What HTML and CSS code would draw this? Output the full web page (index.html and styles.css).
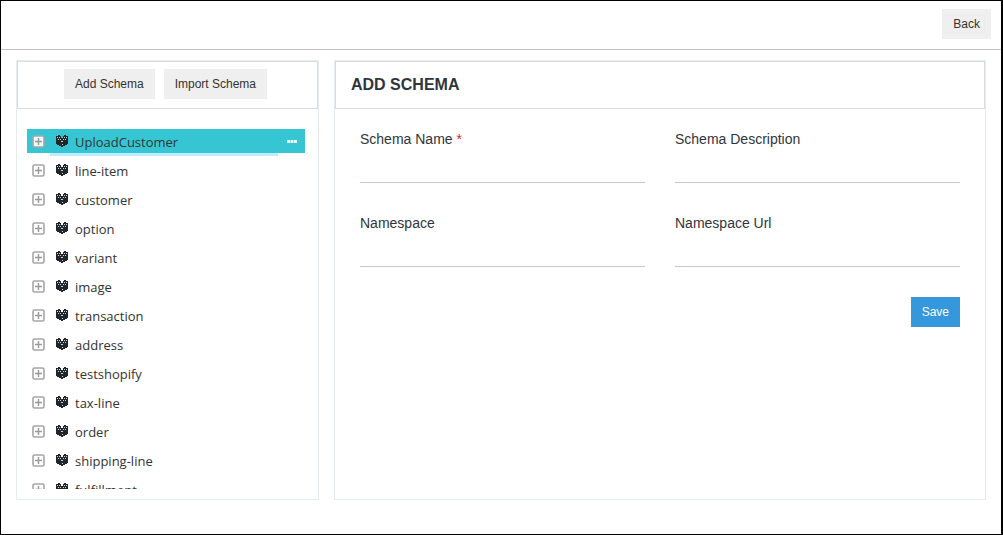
FILE: index.html
```html
<!DOCTYPE html>
<html lang="en">
<head>
<meta charset="utf-8">
<title>Add Schema</title>
<link rel="stylesheet" href="styles.css">
</head>
<body>
<svg class="sprite" aria-hidden="true">
  <symbol id="plus" viewBox="0 0 13 13">
    <rect x="1" y="1" width="11" height="11" rx="1.5" fill="#fff" fill-opacity=".9" stroke="#a6a6a6" stroke-width="1.6"/>
    <path d="M6.5 3v7M3 6.5h7" stroke="#999" stroke-width="1.4"/>
  </symbol>
  <symbol id="cubes" viewBox="0 0 12 12">
    <path d="M0 1h2V0h2v1h1v2h2V1h1V0h2v1h2v8h-1v1H9v1H7v1H5v-1H3v-1H1V9H0z" fill="#20262c"/>
    <path d="M1 2h1v1H1zM3 2h1v1H3zM8 2h1v1H8zM10 2h1v1h-1zM2 4h1v1H2zM9 4h1v1H9zM4 4h1v1H4zM7 4h1v1H7zM5 6h2v1H5zM6 9h1v1H6z" fill="#cfd6da"/>
  </symbol>
</svg>
<div class="page">
  <header class="topbar"><button class="btn" type="button">Back</button></header>
  <main class="content">
    <section class="panel">
      <div class="panel-head actions">
        <button class="btn" type="button">Add Schema</button>
        <button class="btn" type="button">Import Schema</button>
      </div>
      <ul class="tree">
        <li class="node selected"><svg class="plus"><use href="#plus"/></svg><svg class="cubes"><use href="#cubes"/></svg><span class="name">UploadCustomer</span><button class="more" type="button" aria-label="More"><svg class="dots" viewBox="0 0 10 3"><path d="M0 0h3v3H0zM3.5 0h3v3h-3zM7 0h3v3H7z" fill="#fff" fill-opacity=".9"/></svg></button></li>
        <li class="node"><svg class="plus"><use href="#plus"/></svg><svg class="cubes"><use href="#cubes"/></svg><span class="name">line-item</span></li>
        <li class="node"><svg class="plus"><use href="#plus"/></svg><svg class="cubes"><use href="#cubes"/></svg><span class="name">customer</span></li>
        <li class="node"><svg class="plus"><use href="#plus"/></svg><svg class="cubes"><use href="#cubes"/></svg><span class="name">option</span></li>
        <li class="node"><svg class="plus"><use href="#plus"/></svg><svg class="cubes"><use href="#cubes"/></svg><span class="name">variant</span></li>
        <li class="node"><svg class="plus"><use href="#plus"/></svg><svg class="cubes"><use href="#cubes"/></svg><span class="name">image</span></li>
        <li class="node"><svg class="plus"><use href="#plus"/></svg><svg class="cubes"><use href="#cubes"/></svg><span class="name">transaction</span></li>
        <li class="node"><svg class="plus"><use href="#plus"/></svg><svg class="cubes"><use href="#cubes"/></svg><span class="name">address</span></li>
        <li class="node"><svg class="plus"><use href="#plus"/></svg><svg class="cubes"><use href="#cubes"/></svg><span class="name">testshopify</span></li>
        <li class="node"><svg class="plus"><use href="#plus"/></svg><svg class="cubes"><use href="#cubes"/></svg><span class="name">tax-line</span></li>
        <li class="node"><svg class="plus"><use href="#plus"/></svg><svg class="cubes"><use href="#cubes"/></svg><span class="name">order</span></li>
        <li class="node"><svg class="plus"><use href="#plus"/></svg><svg class="cubes"><use href="#cubes"/></svg><span class="name">shipping-line</span></li>
        <li class="node"><svg class="plus"><use href="#plus"/></svg><svg class="cubes"><use href="#cubes"/></svg><span class="name">fulfillment</span></li>
      </ul>
    </section>
    <section class="panel">
      <div class="panel-head"><h1 class="title">ADD SCHEMA</h1></div>
      <form class="form">
        <div class="field"><label for="schema-name">Schema Name <span class="required">*</span></label><input id="schema-name" type="text" required></div>
        <div class="field"><label for="schema-desc">Schema Description</label><input id="schema-desc" type="text"></div>
        <div class="field"><label for="namespace">Namespace</label><input id="namespace" type="text"></div>
        <div class="field"><label for="namespace-url">Namespace Url</label><input id="namespace-url" type="text"></div>
        <div class="submit"><button class="btn primary" type="button">Save</button></div>
      </form>
    </section>
  </main>
</div>
</body>
</html>
```
FILE: styles.css
```css
* { box-sizing: border-box; }
body { margin: 0; font-family: "Liberation Sans", Arial, sans-serif; color: #2f353b; }
.sprite { display: none; }
.page {
  display: flex;
  flex-direction: column;
  height: 100vh;
  border: 1px solid #000;
  border-right-width: 2px;
  background: #fff;
}
.topbar {
  display: flex;
  justify-content: flex-end;
  padding: 8px 10px 10px;
  border-bottom: 1px solid #c2c2c2;
}
.btn {
  height: 30px;
  padding: 0 11px;
  border: 0;
  background: #efefef;
  color: #333;
  font-family: "Liberation Sans", Arial, sans-serif;
  font-size: 12px;
}
.content {
  display: grid;
  grid-template-columns: 303px minmax(0, 1fr);
  gap: 15px;
  flex: 1;
  min-height: 0;
  padding: 10px 15px 34px;
}
.panel {
  display: flex;
  flex-direction: column;
  min-height: 0;
  border: 1px solid #e7ecf1;
}
.panel-head {
  display: flex;
  align-items: center;
  height: 48px;
  padding: 0 15px;
  border: 1px solid #d9dcde;
}
.actions { justify-content: center; gap: 9px; padding: 0 4px 2px 0; }
.title { margin: 0; font-size: 16px; }
.tree {
  flex: 1;
  min-height: 0;
  margin: 20px 13px 10px 10px;
  padding: 0;
  overflow: hidden;
  list-style: none;
}
.node {
  position: relative;
  display: flex;
  align-items: center;
  height: 24px;
  margin-bottom: 5px;
  padding: 0 8px 0 5px;
  font-family: "Open Sans", sans-serif;
  font-size: 13px;
  color: #333;
}
.selected { background: #36c6d3; }
.selected::after {
  content: "";
  position: absolute;
  top: 24px;
  right: 27px;
  left: 23px;
  height: 3px;
  background: #beebff;
}
.plus { width: 13px; height: 13px; margin-right: 11px; }
.cubes { width: 12px; height: 12px; margin-right: 7px; shape-rendering: crispEdges; }
.name { flex: 1; padding-top: 2px; line-height: 22px; }
.more { display: flex; padding: 0; border: 0; background: none; }
.dots { width: 10px; height: 3px; }
.form {
  display: grid;
  grid-template-columns: 1fr 1fr;
  gap: 30px;
  padding: 20px 25px;
}
.field { display: flex; flex-direction: column; font-size: 14px; line-height: 20px; }
.field input {
  width: 100%;
  height: 34px;
  padding: 6px 0;
  border: 0;
  border-bottom: 1px solid #c2cad8;
  background: none;
  font: inherit;
}
.required { color: #e02222; }
.submit { grid-column: 1 / -1; display: flex; justify-content: flex-end; }
.primary { background: #3598dc; color: #fff; }
```
